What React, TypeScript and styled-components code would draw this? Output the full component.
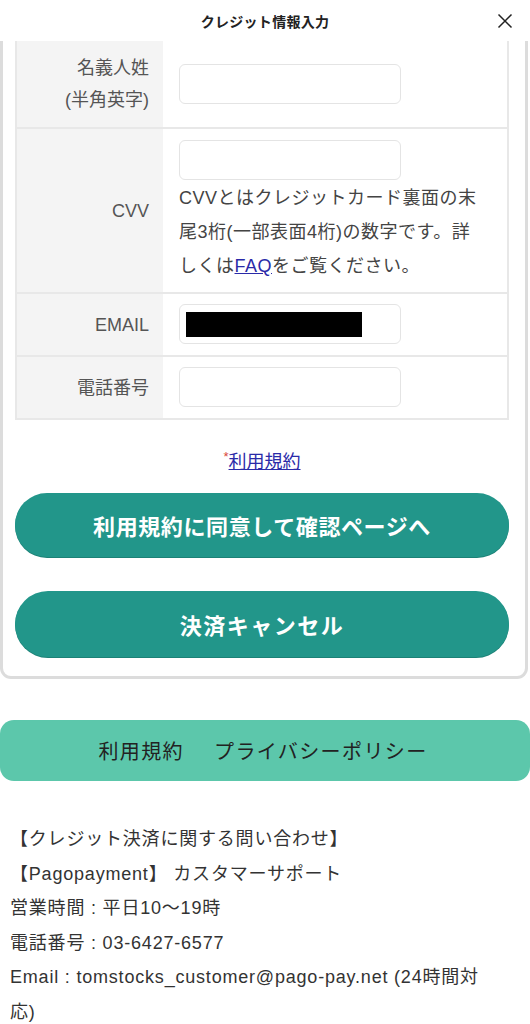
import React from 'react'
import styled, { createGlobalStyle } from 'styled-components'

const GlobalStyle = createGlobalStyle`
    body {
        margin: 0;
        background: #fff;
        font-family: 'Liberation Sans', 'Noto Sans CJK JP', sans-serif;
        color: #333;
    }
    * {
        box-sizing: border-box;
    }
`

const fields = [
    { label: ['名義人姓', '(半角英字)'] },
    { label: ['CVV'], note: true },
    { label: ['EMAIL'], masked: true },
    { label: ['電話番号'] },
]

const App: React.FC = () => {
    return (
        <>
            <GlobalStyle />
            <Header>
                <span />
                <Title>クレジット情報入力</Title>
                <CloseButton aria-label='close'>
                    <svg viewBox='0 0 16 16' width='16' height='16'>
                        <path d='M1.5 1.5L14.5 14.5M14.5 1.5L1.5 14.5' stroke='#222' strokeWidth='1.5' fill='none' />
                    </svg>
                </CloseButton>
            </Header>
            <Card>
                <FormTable>
                    {fields.map((f, i) => (
                        <Row key={i} $last={i === fields.length - 1}>
                            <LabelCell $lines={f.label.length}>
                                {f.label.map((l) => (
                                    <span key={l}>{l}</span>
                                ))}
                            </LabelCell>
                            <ValueCell $note={!!f.note}>
                                <Input>{f.masked && <Redact />}</Input>
                                {f.note && (
                                    <Note>
                                        CVVとはクレジットカード裏面の末尾3桁(一部表面4桁)の数字です。詳しくは<a href='#'>FAQ</a>をご覧ください。
                                    </Note>
                                )}
                            </ValueCell>
                        </Row>
                    ))}
                </FormTable>
                <TermsLink>
                    <sup>*</sup>
                    <a href='#'>利用規約</a>
                </TermsLink>
                <Actions>
                    <PillButton>利用規約に同意して確認ページへ</PillButton>
                    <PillButton $wide>決済キャンセル</PillButton>
                </Actions>
            </Card>
            <FooterNav>
                <a href='#'>利用規約</a>
                <a href='#'>プライバシーポリシー</a>
            </FooterNav>
            <Contact>
                <p>【クレジット決済に関する問い合わせ】</p>
                <p>【Pagopayment】 カスタマーサポート</p>
                <p>営業時間 : 平日10〜19時</p>
                <p>電話番号 : 03-6427-6577</p>
                <p>Email : tomstocks_customer@pago-pay.net (24時間対応)</p>
            </Contact>
        </>
    )
}

const Header = styled.header`
    height: 41px;
    display: grid;
    grid-template-columns: 1fr auto 1fr;
    align-items: center;
    background: #fff;
`

const Title = styled.h1`
    margin: 0;
    font-size: 14px;
    font-weight: 700;
    color: #222;
    letter-spacing: 0.3px;
`

const CloseButton = styled.button`
    justify-self: end;
    margin-right: 17px;
    padding: 0;
    border: none;
    background: none;
    display: flex;
    cursor: pointer;
`

const Card = styled.section`
    width: 528px;
    border: 3px solid #dcdcdc;
    border-top: none;
    border-radius: 0 0 11px 11px;
    padding: 0 16px 19px 12px;
    background: #fff;
`

const FormTable = styled.div`
    border: 2px solid #e8e8e8;
    border-top: none;
`

const Row = styled.div<{ $last: boolean }>`
    display: grid;
    grid-template-columns: 146px 1fr;
    border-bottom: ${(p) => (p.$last ? 'none' : '2px solid #e8e8e8')};
`

const LabelCell = styled.div<{ $lines: number }>`
    background: #f4f4f4;
    display: flex;
    flex-direction: column;
    justify-content: center;
    align-items: flex-end;
    padding: ${(p) => (p.$lines > 1 ? '11px' : '0')} 14px;
    font-size: 18px;
    line-height: 32px;
    color: #555;
`

const ValueCell = styled.div<{ $note: boolean }>`
    padding: ${(p) => (p.$note ? '11px 14px 9px' : '10px 14px 11px')} 16px;
    display: flex;
    flex-direction: column;
    justify-content: center;
`

const Input = styled.div`
    width: 222px;
    height: 40px;
    border: 1px solid #e4e4e4;
    border-radius: 6px;
    background: #fff;
    display: flex;
    align-items: center;
    padding-left: 6px;
`

const Redact = styled.div`
    width: 176px;
    height: 25px;
    background: #000;
`

const Note = styled.p`
    margin: 1px 0 0;
    max-width: 304px;
    font-size: 18px;
    line-height: 34px;
    letter-spacing: 0.5px;
    color: #444;
    a {
        color: #2a2aa8;
    }
`

const TermsLink = styled.div`
    margin-top: 30px;
    text-align: center;
    font-size: 18px;
    line-height: 24px;
    sup {
        color: #d9443a;
        font-size: 13px;
        vertical-align: top;
        line-height: 14px;
    }
    a {
        color: #2a2aa8;
    }
`

const Actions = styled.div`
    margin-top: 19px;
    display: flex;
    flex-direction: column;
    gap: 34px;
`

const PillButton = styled.button<{ $wide?: boolean }>`
    height: ${(p) => (p.$wide ? '66px' : '64px')};
    border: none;
    border-radius: 34px;
    background: #22968a;
    color: #fff;
    font-family: inherit;
    font-size: 22px;
    font-weight: 700;
    letter-spacing: ${(p) => (p.$wide ? '1.5px' : '0.6px')};
    box-shadow: 0 1px 0 #1c8176;
    cursor: pointer;
`

const FooterNav = styled.nav`
    margin-top: 41px;
    height: 61px;
    border-radius: 14px;
    background: #5cc7ab;
    display: flex;
    justify-content: center;
    align-items: center;
    gap: 30px;
    padding-right: 4px;
    a {
        color: #222;
        font-size: 20px;
        text-decoration: none;
        letter-spacing: 1.4px;
    }
`

const Contact = styled.div`
    margin-top: 41px;
    padding: 0 30px 0 10px;
    p {
        margin: 0;
        font-size: 18px;
        line-height: 34.5px;
        color: #333;
        letter-spacing: 0.8px;
    }
`

export default App
